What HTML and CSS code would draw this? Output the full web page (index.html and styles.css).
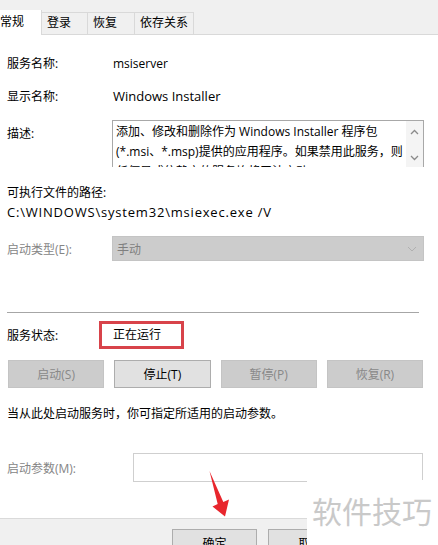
FILE: index.html
```html
<!DOCTYPE html>
<html lang="zh-CN">
<head>
<meta charset="utf-8">
<title>msiserver 属性</title>
<link rel="stylesheet" href="styles.css">
</head>
<body>
<div class="window">
  <div class="tabs">
    <div class="tab active">常规</div>
    <div class="tab t2">登录</div>
    <div class="tab t3">恢复</div>
    <div class="tab t4">依存关系</div>
  </div>
  <div class="panel">
    <div class="row r-name"><span class="label">服务名称:</span><span>msiserver</span></div>
    <div class="row r-display"><span class="label">显示名称:</span><span class="wide">Windows Installer</span></div>
    <div class="row r-desc">
      <span class="label desc-label">描述:</span>
      <div class="descbox">
        <div class="desc-text">添加、修改和删除作为 Windows Installer 程序包<br>(*.msi、*.msp)提供的应用程序。如果禁用此服务，则<br>任何显式依赖它的服务均将无法启动。</div>
        <div class="scrollbar">
          <svg width="9" height="6" viewBox="0 0 9 6"><path d="M1 5 L4.5 1.5 L8 5" fill="none" stroke="#8a8a8a" stroke-width="1.3"/></svg>
          <svg width="9" height="6" viewBox="0 0 9 6"><path d="M1 1 L4.5 4.5 L8 1" fill="none" stroke="#8a8a8a" stroke-width="1.3"/></svg>
        </div>
      </div>
    </div>
    <div class="row r-exec"><span>可执行文件的路径:</span></div>
    <div class="row r-path"><span class="path">C:\WINDOWS\system32\msiexec.exe /V</span></div>
    <div class="row r-type">
      <span class="label disabled">启动类型(E):</span>
      <div class="combo"><span>手动</span>
        <svg width="10" height="6" viewBox="0 0 10 6"><path d="M1 1 L5 5 L9 1" fill="none" stroke="#b0b0b0" stroke-width="1"/></svg>
      </div>
    </div>
    <div class="separator"></div>
    <div class="row r-status">
      <span class="label status-label">服务状态:</span>
      <div class="status-box">正在运行</div>
    </div>
    <div class="btn-row">
      <div class="btn off">启动(S)</div>
      <div class="btn on">停止(T)</div>
      <div class="btn off">暂停(P)</div>
      <div class="btn off">恢复(R)</div>
    </div>
    <div class="row r-hint"><span>当从此处启动服务时，你可指定所适用的启动参数。</span></div>
    <div class="row r-param">
      <span class="label param-label disabled">启动参数(M):</span>
      <div class="param-input"></div>
    </div>
  </div>
  <div class="footer">
    <div class="fbtn">确定</div>
    <div class="fbtn">取消</div>
    <div class="fbtn">应用(A)</div>
  </div>
  <svg class="arrow" width="40" height="60" viewBox="200 465 40 60">
    <polygon points="209.5,471 223.3,502 229,499.6 225,516.5 212.5,506.5 217.7,504" fill="#e8262d"/>
  </svg>
  <div class="watermark">软件技巧</div>
</div>
</body>
</html>
```
FILE: styles.css
```css
html, body {
  margin: 0;
  padding: 0;
  background: #ffffff;
}
body {
  font-family: "Open Sans", "Noto Sans CJK SC", sans-serif;
  font-size: 12px;
  color: #000;
  overflow: hidden;
}
.window {
  position: relative;
  width: 438px;
  height: 545px;
  overflow: hidden;
  background: #fff;
  display: flex;
  flex-direction: column;
}
.tabs {
  height: 35px;
  flex: none;
  box-sizing: border-box;
  background: #f0f0f0;
  border-bottom: 1px solid #d9d9d9;
  display: flex;
  align-items: flex-end;
}
.tab {
  box-sizing: border-box;
  height: 22px;
  border-top: 1px solid #d9d9d9;
  border-right: 1px solid #d9d9d9;
  padding-left: 5px;
  line-height: 20px;
  background: #f0f0f0;
}
.tab.active {
  height: 25px;
  margin-bottom: -1px;
  background: #fff;
  border-top: none;
  padding-left: 0;
  padding-top: 2px;
  width: 42px;
}
.t2 { width: 46px; }
.t3 { width: 47px; }
.t4 { width: 59px; }

.panel {
  padding: 0 14px 0 7px;
  flex: none;
}
.row {
  display: flex;
  align-items: center;
  height: 20px;
  white-space: nowrap;
}
.label {
  width: 106px;
  flex: none;
}
.wide { font-size: 13px; }
.path {
  font-size: 13px;
  letter-spacing: 0.8px;
}
.disabled { color: #858585; }
.r-name { margin-top: 18px; }
.r-display { margin-top: 13px; }
.r-desc {
  margin-top: 14px;
  height: 47px;
  align-items: flex-start;
}
.desc-label { padding-top: 4px; }
.descbox {
  margin-left: -1px;
  width: 312px;
  height: 47px;
  box-sizing: border-box;
  border: 1px solid #a8a8a8;
  border-bottom: none;
  display: flex;
  overflow: hidden;
}
.desc-text {
  flex: 1;
  padding: 1px 0 0 3px;
  line-height: 20px;
  overflow: hidden;
}
.scrollbar {
  width: 17px;
  flex: none;
  background: #f4f4f4;
  display: flex;
  flex-direction: column;
  justify-content: space-between;
  align-items: center;
  padding: 8px 0 6px;
  box-sizing: border-box;
}
.r-exec { margin-top: 15px; }
.r-type {
  margin-top: 14px;
  height: 25px;
}
.combo {
  margin-left: -1px;
  width: 312px;
  height: 25px;
  box-sizing: border-box;
  background: #cccccc;
  border: 1px solid #c4c4c4;
  color: #7f7f7f;
  display: flex;
  align-items: center;
  justify-content: space-between;
  padding: 0 6px 0 4px;
}
.separator {
  margin-top: 51px;
  margin-right: 5px;
  height: 1px;
  background: #a6a6a6;
}
.r-status {
  margin-top: 8px;
  height: 28px;
}
.status-label { width: 92px; }
.status-box {
  box-sizing: border-box;
  width: 85px;
  height: 28px;
  border: 3px solid #d8434a;
  padding-left: 11px;
  line-height: 22px;
}
.btn-row {
  margin-top: 11px;
  margin-left: 1px;
  width: 415px;
  display: grid;
  grid-template-columns: repeat(4, 1fr);
  gap: 10px;
}
.btn {
  box-sizing: border-box;
  height: 28px;
  display: flex;
  align-items: center;
  justify-content: center;
}
.btn.off {
  background: #cccccc;
  border: 1px solid #c4c4c4;
  color: #888888;
}
.btn.on {
  background: #e1e1e1;
  border: 1px solid #adadad;
  color: #000;
}
.r-hint { margin-top: 15px; }
.r-param {
  margin-top: 30px;
  height: 29px;
}
.param-label { width: 126px; }
.param-input {
  box-sizing: border-box;
  width: 290px;
  height: 29px;
  border: 1px solid #cfcfcf;
  background: #fff;
}
.footer {
  margin-top: 36px;
  flex: 1;
  background: #f0f0f0;
  border-top: 1px solid #dadada;
  padding: 10px 0 0 172px;
  display: flex;
  gap: 11px;
}
.fbtn {
  flex: none;
  box-sizing: border-box;
  width: 85px;
  height: 24px;
  background: #e1e1e1;
  border: 1px solid #adadad;
  display: flex;
  align-items: center;
  justify-content: center;
  padding-top: 4px;
}
.arrow {
  position: absolute;
  left: 200px;
  top: 465px;
}
.watermark {
  position: absolute;
  left: 307px;
  top: 480px;
  width: 131px;
  height: 65px;
  background: #fff;
  color: #c9c9c9;
  font-family: "Noto Sans CJK SC", sans-serif;
  font-size: 30px;
  line-height: 30px;
  padding: 15px 0 0 5px;
  box-sizing: border-box;
  white-space: nowrap;
}
```
